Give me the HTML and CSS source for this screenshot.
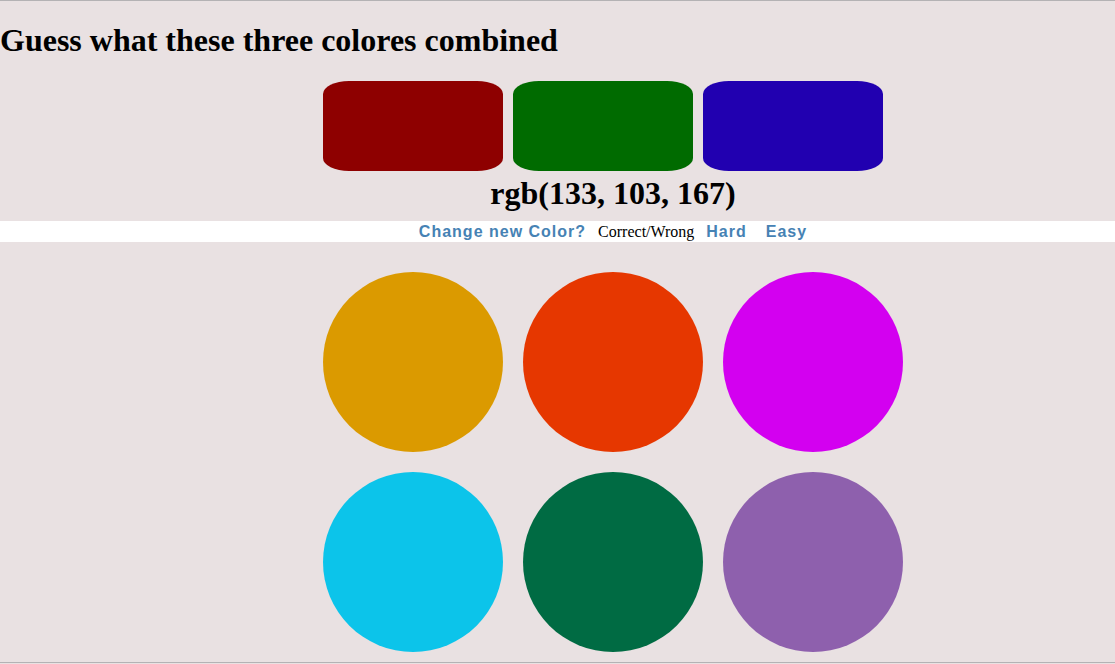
FILE: index.html
```html
<!DOCTYPE html>
<html lang="en">

<head>
  <meta charset="UTF-8">
  <meta name="viewport" content="width=device-width, initial-scale=1.0">
  <title>Colour Guess</title>
  <link rel="stylesheet" href="styles.css">
</head>

<body>
  <div class="page">
    <h1 class="title">Guess what these three colores combined</h1>

    <div class="board">
      <div class="swatches">
        <div class="swatch red"></div>
        <div class="swatch green"></div>
        <div class="swatch blue"></div>
      </div>
      <h1 class="answer">rgb(133, 103, 167)</h1>
    </div>

    <div class="bar">
      <div class="bar-inner">
        <button class="link new-color">Change new Color?</button>
        <span class="message">Correct/Wrong</span>
        <button class="link hard">Hard</button>
        <button class="link easy">Easy</button>
      </div>
    </div>

    <div class="board circles">
      <div class="circle c1"></div>
      <div class="circle c2"></div>
      <div class="circle c3"></div>
      <div class="circle c4"></div>
      <div class="circle c5"></div>
      <div class="circle c6"></div>
    </div>
  </div>
</body>

</html>
```

FILE: styles.css
```css
/* Global Styles */
body {
  margin: 0;
  padding: 0;
  background: #e9e1e2;
  font-family: 'Liberation Serif', 'Times New Roman', serif;
  color: #000;
}

.page {
  height: calc(100vh - 1px);
  box-sizing: border-box;
  border-top: 1px solid #b4b2b4;
  border-bottom: 1px solid #b4b2b4;
  overflow: hidden;
}

/* Header */
.title {
  font-size: 32px;
  margin: 21px 0 22px;
}

.board {
  width: 580px;
  margin-left: 323px;
  text-align: center;
}

/* Three colours */
.swatches {
  display: flex;
  gap: 10px;
}

.swatch {
  width: 180px;
  height: 90px;
  border-radius: 26px / 13px;
}

.red {
  background: #8e0000;
}

.green {
  background: #006b00;
}

.blue {
  background: #2100b0;
}

.answer {
  font-size: 32px;
  margin: 4px 0 9px;
}

/* Control bar */
.bar {
  background: #fff;
  height: 21px;
}

.bar-inner {
  width: 580px;
  margin-left: 323px;
  display: flex;
  justify-content: center;
  align-items: center;
  height: 21px;
}

.link {
  background: none;
  border: none;
  padding: 0;
  margin: 0 6px;
  font-family: 'Liberation Sans', Arial, sans-serif;
  font-weight: bold;
  font-size: 16px;
  letter-spacing: 1px;
  color: #4682b4;
  cursor: pointer;
}

.easy {
  margin-left: 13px;
}

.message {
  font-size: 16px;
  margin: 0 6px;
}

/* Guess circles */
.circles {
  display: flex;
  flex-wrap: wrap;
  gap: 20px;
  margin-top: 30px;
}

.circle {
  width: 180px;
  height: 180px;
  border-radius: 50%;
}

.c1 {
  background: #db9a00;
}

.c2 {
  background: #e63700;
}

.c3 {
  background: #d300f0;
}

.c4 {
  background: #0cc4ea;
}

.c5 {
  background: #006b43;
}

.c6 {
  background: #8e60ad;
}
```
